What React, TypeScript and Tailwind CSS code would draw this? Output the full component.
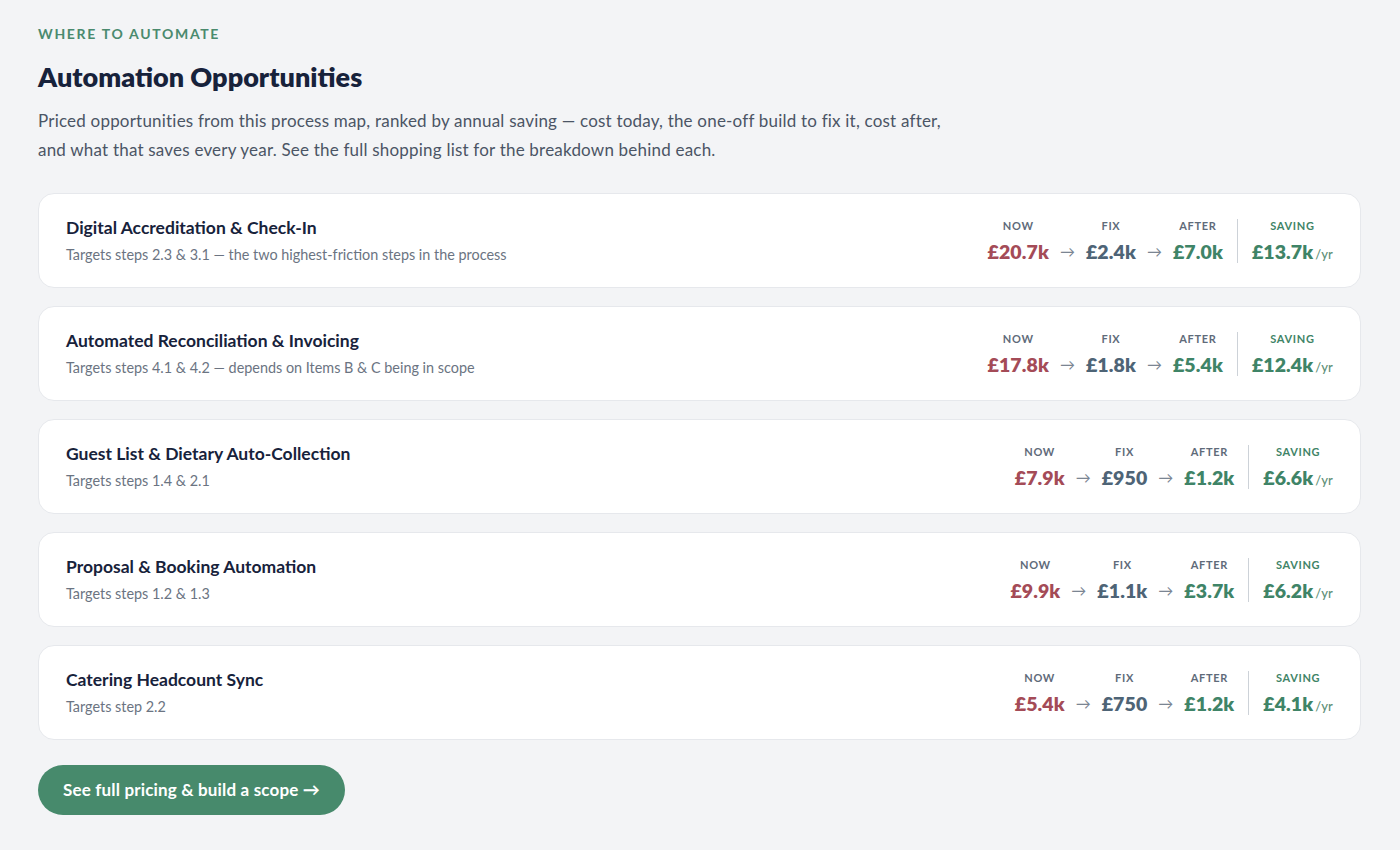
import React from "react";

type Opportunity = {
  title: string;
  targets: string;
  now: string;
  fix: string;
  after: string;
  saving: string;
};

const opportunities: Opportunity[] = [
  {
    title: "Digital Accreditation & Check-In",
    targets: "Targets steps 2.3 & 3.1 — the two highest-friction steps in the process",
    now: "£20.7k",
    fix: "£2.4k",
    after: "£7.0k",
    saving: "£13.7k",
  },
  {
    title: "Automated Reconciliation & Invoicing",
    targets: "Targets steps 4.1 & 4.2 — depends on Items B & C being in scope",
    now: "£17.8k",
    fix: "£1.8k",
    after: "£5.4k",
    saving: "£12.4k",
  },
  {
    title: "Guest List & Dietary Auto-Collection",
    targets: "Targets steps 1.4 & 2.1",
    now: "£7.9k",
    fix: "£950",
    after: "£1.2k",
    saving: "£6.6k",
  },
  {
    title: "Proposal & Booking Automation",
    targets: "Targets steps 1.2 & 1.3",
    now: "£9.9k",
    fix: "£1.1k",
    after: "£3.7k",
    saving: "£6.2k",
  },
  {
    title: "Catering Headcount Sync",
    targets: "Targets step 2.2",
    now: "£5.4k",
    fix: "£750",
    after: "£1.2k",
    saving: "£4.1k",
  },
];

const labelCls =
  "text-[11px] font-bold tracking-[0.06em] uppercase leading-none text-[#5f6b7a]";
const valueCls = "text-[19.5px] font-extrabold leading-none mt-[11px] tracking-[0.005em]";

function Metric({ label, value, color }: { label: string; value: string; color: string }) {
  return (
    <div className="flex flex-col items-center">
      <span className={labelCls}>{label}</span>
      <span className={`${valueCls} ${color}`}>{value}</span>
    </div>
  );
}

function Arrow() {
  return <span className="self-end text-[15px] leading-none pb-[2px] text-[#7b8592]">→</span>;
}

function OpportunityCard({ item }: { item: Opportunity }) {
  return (
    <div className="flex items-center justify-between h-[95px] bg-white border border-[#e6e8ec] rounded-2xl pl-[27px] pr-[27px]">
      <div className="flex flex-col">
        <h3 className="text-[17.5px] font-bold text-[#17223b] leading-none">{item.title}</h3>
        <p className="text-[14.4px] text-[#6b7482] leading-none mt-[11px]">{item.targets}</p>
      </div>
      <div className="flex items-center">
        <div className="flex items-end gap-[11px]">
          <Metric label="Now" value={item.now} color="text-[#a44b57]" />
          <Arrow />
          <Metric label="Fix" value={item.fix} color="text-[#4e6476]" />
          <Arrow />
          <Metric label="After" value={item.after} color="text-[#3f8467]" />
        </div>
        <div className="w-px h-[44px] bg-[#cdd2d8] mx-[14px]" />
        <div className="flex flex-col items-center">
          <span className={`${labelCls} !text-[#3f8467]`}>Saving</span>
          <span className={`${valueCls} text-[#3f8467]`}>
            {item.saving}
            <span className="text-[13px] font-medium text-[#5f8f78] ml-[2px]">/yr</span>
          </span>
        </div>
      </div>
    </div>
  );
}

export default function App() {
  return (
    <div
      className="min-h-screen bg-[#f3f4f6] px-[38px] pt-[27px] pb-10"
      style={{ fontFamily: "Lato, 'Noto Sans', sans-serif" }}
    >
      <div className="text-[14px] font-bold tracking-[0.12em] text-[#4a8a6e] leading-none">
        WHERE TO AUTOMATE
      </div>
      <h1 className="text-[27px] font-extrabold text-[#17223b] leading-none mt-[22px]">
        Automation Opportunities
      </h1>
      <p className="text-[17px] tracking-[0.012em] text-[#4b5565] leading-[29px] mt-[16px] max-w-[960px]">
        Priced opportunities from this process map, ranked by annual saving — cost today, the
        one-off build to fix it, cost after,
        <br />
        and what that saves every year. See the full shopping list for the breakdown behind each.
      </p>
      <div className="flex flex-col gap-[18px] mt-[29px] w-[1323px]">
        {opportunities.map((o) => (
          <OpportunityCard key={o.title} item={o} />
        ))}
      </div>
      <button className="mt-[25px] h-[50px] px-[25px] rounded-full bg-[#478a6c] text-white text-[17px] font-bold tracking-[0.01em]">
        See full pricing & build a scope →
      </button>
    </div>
  );
}
